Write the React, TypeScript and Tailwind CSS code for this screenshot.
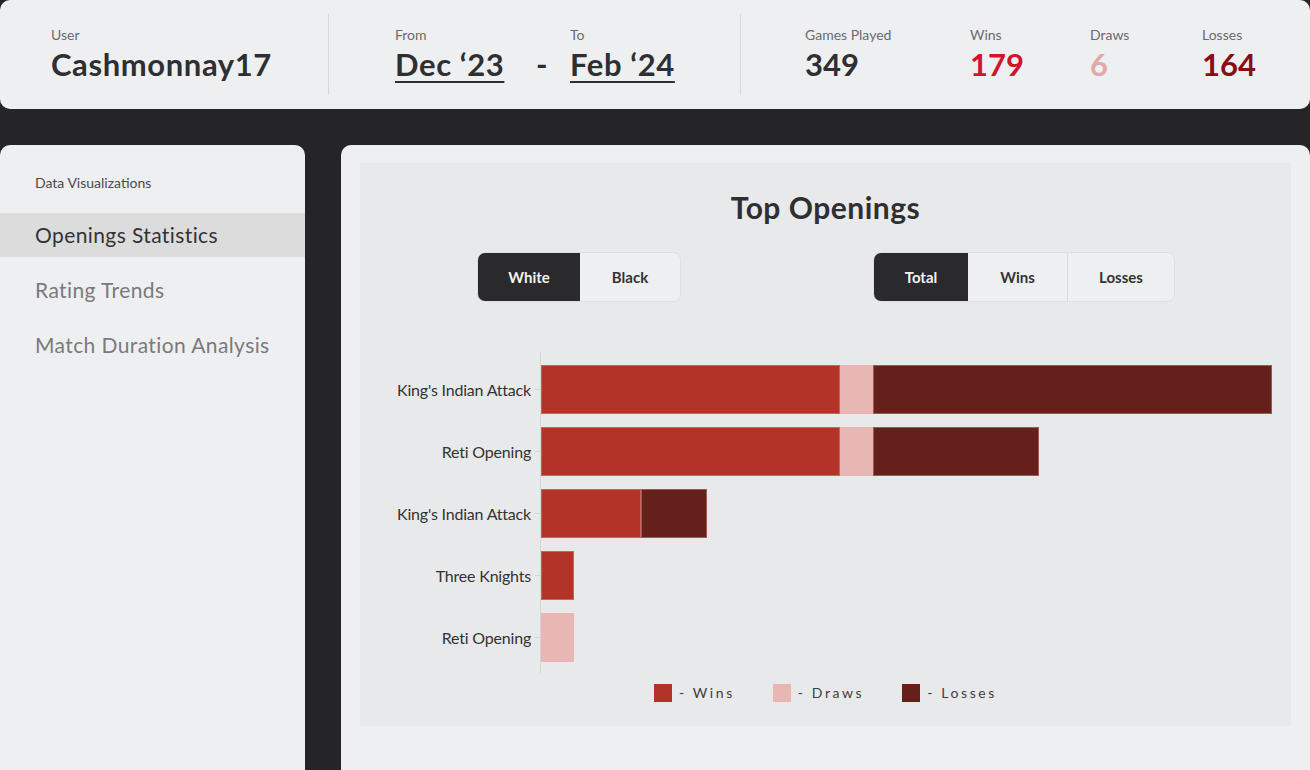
import React from "react"

const font = { fontFamily: "Lato, 'Open Sans', sans-serif" }

const rows = [
  { name: "King's Indian Attack", w: 299, d: 33, l: 399 },
  { name: "Reti Opening", w: 299, d: 33, l: 166 },
  { name: "King's Indian Attack", w: 100, d: 0, l: 66 },
  { name: "Three Knights", w: 33, d: 0, l: 0 },
  { name: "Reti Opening", w: 0, d: 33, l: 0 },
]

function Stat({ label, value, color, width }: { label: string; value: string; color: string; width: string }) {
  return (
    <div className={`flex flex-col ${width}`}>
      <span className="text-[14px] text-[#6b6b6e] leading-[18px]">{label}</span>
      <span className={`text-[31px] font-bold leading-[40px] ${color}`}>{value}</span>
    </div>
  )
}

function Header() {
  return (
    <div className="h-[109px] bg-[#eeeff0] rounded-[10px] flex items-center pl-[51px]">
      <div className="w-[277px] flex flex-col">
        <span className="text-[14px] text-[#6b6b6e] leading-[18px]">User</span>
        <span className="text-[31px] font-bold leading-[40px] text-[#2f2f31] tracking-[0.6px]">Cashmonnay17</span>
      </div>
      <div className="w-px h-[81px] bg-[#d8d8da]" />
      <div className="ml-[66px] w-[345px] flex items-end">
        <div className="flex flex-col w-[141px]">
          <span className="text-[14px] text-[#6b6b6e] leading-[18px]">From</span>
          <span className="text-[31px] font-bold leading-[40px] text-[#2f2f31] underline underline-offset-[5px] decoration-[2px] self-start tracking-[0.6px]">Dec ‘23</span>
        </div>
        <span className="text-[31px] font-bold leading-[40px] text-[#2f2f31] w-[34px]">-</span>
        <div className="flex flex-col">
          <span className="text-[14px] text-[#6b6b6e] leading-[18px]">To</span>
          <span className="text-[31px] font-bold leading-[40px] text-[#2f2f31] underline underline-offset-[5px] decoration-[2px] tracking-[0.6px]">Feb ‘24</span>
        </div>
      </div>
      <div className="w-px h-[81px] bg-[#d8d8da]" />
      <div className="ml-[64px] flex">
        <Stat label="Games Played" value="349" color="text-[#2f2f31]" width="w-[165px]" />
        <Stat label="Wins" value="179" color="text-[#d3132b]" width="w-[120px]" />
        <Stat label="Draws" value="6" color="text-[#e2a9a9]" width="w-[112px]" />
        <Stat label="Losses" value="164" color="text-[#8a0d14]" width="w-[80px]" />
      </div>
    </div>
  )
}

function Sidebar() {
  const items = ["Openings Statistics", "Rating Trends", "Match Duration Analysis"]
  return (
    <div className="w-[305px] h-[660px] bg-[#eeeff0] rounded-[10px] pt-[28px]">
      <div className="px-[35px] text-[14px] text-[#4a4a4d] leading-[20px] mb-[20px]">Data Visualizations</div>
      <div className="flex flex-col gap-[11px]">
        {items.map((it, i) => (
          <div key={it} className={`h-[44px] flex items-center px-[35px] text-[21px] tracking-[0.4px] ${i === 0 ? "bg-[#dcdcdd] text-[#333335]" : "text-[#7a7a7d]"}`}>
            {it}
          </div>
        ))}
      </div>
    </div>
  )
}

function Toggle({ items, widths }: { items: string[]; widths: string[] }) {
  return (
    <div className="flex h-[50px] rounded-[8px] border border-[#dfdfe1] overflow-hidden">
      {items.map((it, i) => (
        <div
          key={it}
          className={`${widths[i]} flex items-center justify-center text-[15px] font-bold ${i === 0 ? "bg-[#2a2a2c] text-[#f2f2f2]" : "bg-[#eeeff0] text-[#333335]"} ${i > 1 ? "border-l border-[#dcdcde]" : ""}`}
        >
          {it}
        </div>
      ))}
    </div>
  )
}

function Chart() {
  return (
    <div className="flex">
      <div className="w-[180px] flex flex-col pt-[13px] gap-[13px]">
        {rows.map((r, i) => (
          <div key={i} className="h-[49px] flex items-center justify-end gap-[4px]">
            <span className="text-[16px] text-[#333335] tracking-[-0.2px]">{r.name}</span>
            <span className="w-[5px] h-px bg-[#d3d3d5]" />
          </div>
        ))}
      </div>
      <div className="h-[321px] border-l border-[#d6d6d8] pt-[13px] flex flex-col gap-[13px]">
        {rows.map((r, i) => (
          <div key={i} className="h-[49px] flex">
            {r.w > 0 && <div className="h-full bg-[#b33328] shadow-[inset_0_0_0_1px_rgba(230,160,150,0.45)]" style={{ width: r.w }} />}
            {r.d > 0 && <div className="h-full bg-[#e8b6b3]" style={{ width: r.d }} />}
            {r.l > 0 && <div className="h-full bg-[#65201b] shadow-[inset_0_0_0_1px_rgba(230,160,150,0.45)]" style={{ width: r.l }} />}
          </div>
        ))}
      </div>
    </div>
  )
}

function Legend() {
  const items = [
    { label: "- Wins", c: "bg-[#b33328]" },
    { label: "- Draws", c: "bg-[#e8b6b3]" },
    { label: "- Losses", c: "bg-[#65201b]" },
  ]
  return (
    <div className="flex justify-center gap-[38px] mt-[9px]">
      {items.map((it) => (
        <div key={it.label} className="flex items-center gap-[7px]">
          <span className={`w-[18px] h-[18px] ${it.c}`} />
          <span className="text-[14px] text-[#3e3e41] tracking-[2.6px]">{it.label}</span>
        </div>
      ))}
    </div>
  )
}

export default function App() {
  return (
    <div className="w-[1310px] h-[770px] overflow-hidden bg-[#252527]" style={font}>
      <Header />
      <div className="flex gap-[36px] mt-[36px]">
        <Sidebar />
        <div className="flex-1 h-[660px] bg-[#eeeff0] rounded-[10px] pt-[18px] px-[19px]">
          <div className="h-[563px] bg-[#e8e9eb] pt-[26px]">
            <h2 className="text-center text-[30px] font-bold text-[#2f2f31] leading-[36px] tracking-[0.5px]">Top Openings</h2>
            <div className="flex mt-[27px] pl-[117px] gap-[192px]">
              <Toggle items={["White", "Black"]} widths={["w-[102px]", "w-[100px]"]} />
              <Toggle items={["Total", "Wins", "Losses"]} widths={["w-[94px]", "w-[99px]", "w-[107px]"]} />
            </div>
            <div className="mt-[50px]">
              <Chart />
            </div>
            <Legend />
          </div>
        </div>
      </div>
    </div>
  )
}
